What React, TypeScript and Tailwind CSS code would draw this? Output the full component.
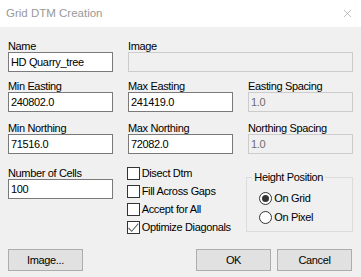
import { X } from "lucide-react";

const Field = ({
  label,
  value,
  disabled = false,
  className = "w-[105px]",
}: {
  label: string;
  value: string;
  disabled?: boolean;
  className?: string;
}) => {
  return (
    <div className={`flex flex-col ${className}`}>
      <span className="h-[12px] leading-[12px]">{label}</span>
      <div
        className={`h-[20px] flex items-center pl-[2px] border ${
          disabled
            ? "border-[#cccccc] bg-[#f0f0f0] text-[#6d6d6d]"
            : "border-[#7a7a7a] bg-white text-black"
        }`}
      >
        {value}
      </div>
    </div>
  );
};

const Check = ({ label, checked = false }: { label: string; checked?: boolean }) => {
  return (
    <div className="flex items-center h-[13px] gap-[2px]">
      <div className="w-[13px] h-[13px] border border-[#333333] bg-white">
        {checked && (
          <svg width="11" height="11" viewBox="0 0 11 11" className="block">
            <polyline points="0.5,6 3.7,9.3 10.3,1.7" fill="none" stroke="#666666" strokeWidth="1.1" />
          </svg>
        )}
      </div>
      <span className="leading-[13px]">{label}</span>
    </div>
  );
};

const Radio = ({ label, checked = false }: { label: string; checked?: boolean }) => {
  return (
    <div className="flex items-center h-[13px] gap-[2px]">
      <div className="w-[13px] h-[13px] rounded-full border border-[#333333] bg-white flex items-center justify-center">
        {checked && <div className="w-[7px] h-[7px] rounded-full bg-[#333333]" />}
      </div>
      <span className="leading-[13px]">{label}</span>
    </div>
  );
};

const Button = ({ label, className = "" }: { label: string; className?: string }) => {
  return (
    <button
      className={`w-[75px] h-[22px] bg-[#e1e1e1] border border-[#adadad] text-black flex items-center justify-center ${className}`}
    >
      {label}
    </button>
  );
};

export default function App() {
  return (
    <div className="w-[361px] h-[277px] bg-[#f0f0f0] flex flex-col text-[11px] tracking-[-0.35px] text-black font-['Liberation_Sans',Arial,sans-serif]">
      <div className="h-[27px] bg-white flex items-center justify-between pl-[6px] pr-[7px]">
        <span className="text-[11.5px] tracking-normal text-[#999999]">Grid DTM Creation</span>
        <X className="w-[13px] h-[13px] text-[#8a8a8a]" strokeWidth={1} />
      </div>

      <div className="flex flex-col px-2 pt-[13px]">
        <div className="flex gap-[15px]">
          <Field label="Name" value="HD Quarry_tree" />
          <Field label="Image" value="" disabled className="w-[225px]" />
        </div>

        <div className="flex gap-[15px] mt-[8px]">
          <Field label="Min Easting" value="240802.0" />
          <Field label="Max Easting" value="241419.0" />
          <Field label="Easting Spacing" value="1.0" disabled />
        </div>

        <div className="flex gap-[15px] mt-[10px]">
          <Field label="Min Northing" value="71516.0" />
          <Field label="Max Northing" value="72082.0" />
          <Field label="Northing Spacing" value="1.0" disabled />
        </div>

        <div className="flex mt-[13px]">
          <Field label="Number of Cells" value="100" />
          <div className="flex flex-col gap-[5px] ml-[14px] w-[106px]">
            <Check label="Disect Dtm" />
            <Check label="Fill Across Gaps" />
            <Check label="Accept for All" />
            <Check label="Optimize Diagonals" checked />
          </div>
          <fieldset className="mt-[4px] ml-[14px] w-[107px] h-[61px] border border-[#dcdcdc]">
            <legend className="ml-[5px] px-[2px] h-[12px] leading-[12px]">Height Position</legend>
            <div className="flex flex-col gap-[6px] pt-[9px] pl-[12px]">
              <Radio label="On Grid" checked />
              <Radio label="On Pixel" />
            </div>
          </fieldset>
        </div>
      </div>

      <div className="flex items-center mt-[15px] pl-[8px] pr-[9px]">
        <Button label="Image..." />
        <Button label="OK" className="ml-auto" />
        <Button label="Cancel" className="ml-[6px]" />
      </div>
    </div>
  );
}
